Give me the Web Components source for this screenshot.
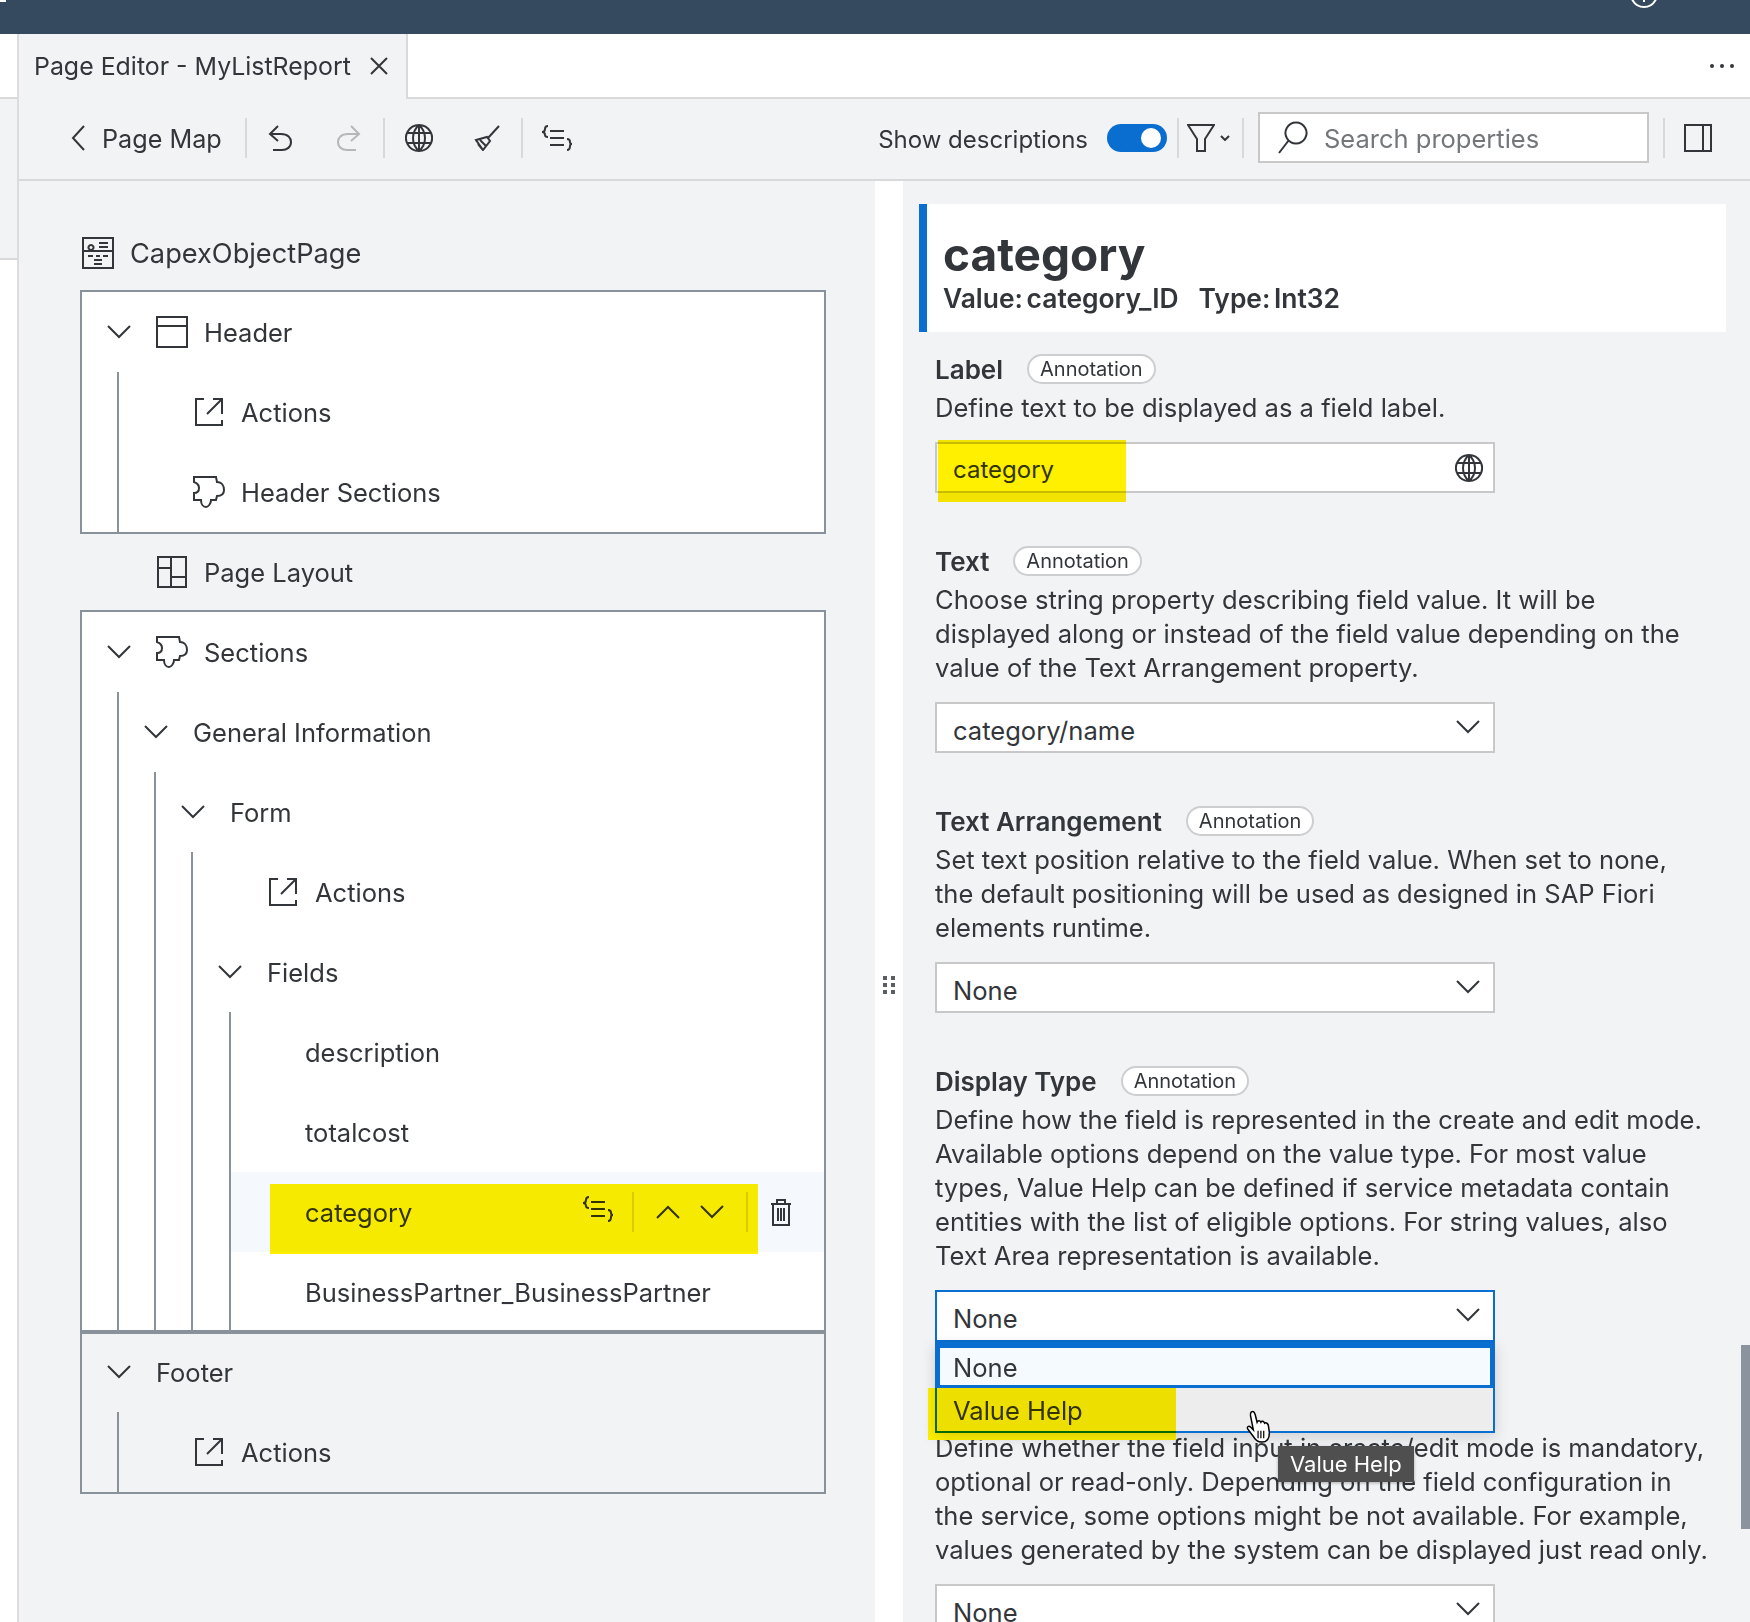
<!DOCTYPE html>
<html>
<head>
<meta charset="utf-8">
<title>Page Editor - MyListReport</title>
<style>
  html, body { margin: 0; height: 1622px; overflow: hidden; background: #fff; }
  body { font-family: Inter, "Liberation Sans", sans-serif; color: #32363a; font-size: 25.5px; }
</style>
</head>
<body>
<ide-frame>
  <top-bar></top-bar>
  <side-strip slot="strip"></side-strip>
  <tab-bar slot="editor" title-text="Page Editor - MyListReport"></tab-bar>
  <tool-bar slot="editor"></tool-bar>
  <editor-body slot="editor">
    <tree-pane slot="tree" title-text="CapexObjectPage">
      <tree-box>
        <tree-row chevron icon="window">Header</tree-row>
        <tree-group indent="35">
          <tree-row icon="external">Actions</tree-row>
          <tree-row icon="puzzle">Header Sections</tree-row>
        </tree-group>
      </tree-box>
      <tree-row icon="layout" outer>Page Layout</tree-row>
      <tree-box clip="722">
        <tree-row chevron icon="puzzle">Sections</tree-row>
        <tree-group indent="35">
          <tree-row chevron>General Information</tree-row>
          <tree-group indent="35">
            <tree-row chevron>Form</tree-row>
            <tree-group indent="35">
              <tree-row icon="external">Actions</tree-row>
              <tree-row chevron>Fields</tree-row>
              <tree-group indent="36">
                <tree-row>description</tree-row>
                <tree-row>totalcost</tree-row>
                <tree-row selected>category
                  <row-actions slot="actions"></row-actions>
                </tree-row>
                <tree-row>BusinessPartner_BusinessPartner</tree-row>
              </tree-group>
            </tree-group>
          </tree-group>
        </tree-group>
      </tree-box>
      <tree-box clip="162" plain>
        <tree-row chevron height="78" style="padding-bottom: 2px">Footer</tree-row>
        <tree-group indent="35">
          <tree-row icon="external">Actions</tree-row>
        </tree-group>
      </tree-box>
    </tree-pane>
    <pane-splitter slot="splitter"></pane-splitter>
    <props-pane slot="props">
      <props-header name="category" value="category_ID" type="Int32"></props-header>
      <prop-field label="Label" badge="Annotation">
        Define text to be displayed as a field label.
        <prop-input slot="control" value="category" marked></prop-input>
      </prop-field>
      <prop-field label="Text" badge="Annotation">
        Choose string property describing field value. It will be displayed along or instead of the field value depending on the value of the Text Arrangement property.
        <prop-select slot="control" value="category/name"></prop-select>
      </prop-field>
      <prop-field label="Text Arrangement" badge="Annotation">
        Set text position relative to the field value. When set to none, the default positioning will be used as designed in SAP Fiori elements runtime.
        <prop-select slot="control" value="None"></prop-select>
      </prop-field>
      <prop-field label="Display Type" badge="Annotation" raised>
        Define how the field is represented in the create and edit mode. Available options depend on the value type. For most value types, Value Help can be defined if service metadata contain entities with the list of eligible options. For string values, also Text Area representation is available.
        <prop-select slot="control" value="None" open></prop-select>
      </prop-field>
      <prop-field>
        Define whether the field input in create/edit mode is mandatory, optional or read-only. Depending on the field configuration in the service, some options might be not available. For example, values generated by the system can be displayed just read only.
        <prop-select slot="control" value="None"></prop-select>
      </prop-field>
    </props-pane>
  </editor-body>
</ide-frame>

<script>
const ICONS = {
  chevronDown: [24, 14, 'M1 1L12 12L23 1'],
  chevronUp: [24, 14, 'M1 13L12 2L23 13'],
  chevronLeft: [14, 26, 'M13 1L2 13L13 25'],
  close: [18, 18, 'M1 1L17 17M17 1L1 17'],
  window: [32, 32, 'M1 1H31V31H1ZM1 10H31'],
  external: [28, 28, 'M9 1H1V27H27V22M18 1H27V16M27 1L12 16'],
  puzzle: [32, 32, 'M1 1H23L24 6C29 6 31 10 31 14C31 18 28 20 24 20L23 24H18C18 28 15 31 13 31C10 31 8 28 8 24H1V17C4 17 6 15 6 12C6 9 4 7 1 6Z'],
  layout: [30, 32, 'M1 1H29V31H1ZM14 1V31M1 12H14M14 21H29'],
  page: [32, 32, 'M1 1H31V31H1ZM1 14H31M17 6H26M17 10H26M6 19H11M14 19H18M21 19H26M12 23H20M12 27H20M9 8a2.5 2.5 0 1 0 .01 0'],
  undo: [25, 26, 'M10 1L2 9L10 16M2 9H13C20 9 23 13 23 17C23 22 19 25 14 25H5'],
  redo: [25, 26, 'M15 1L23 9L15 16M23 9H12C5 9 2 13 2 17C2 22 6 25 11 25H20'],
  globe: [28, 28, 'M14 1a13 13 0 1 0 .01 0M14 1C6 8 6 20 14 27C22 20 22 8 14 1M14 1V27M2.500 9H25.500M2.500 19H25.500'],
  broom: [26, 26, 'M25 1L14 13M2 15L13 12L16 16L9 25ZM6 15L12 21M4 19L9 25'],
  braces: [33, 26, 'M8 1C5 1 5 3 5 4C5 6 4 7 2 7C4 7 5 8 5 10C5 11 6 12 8 12M10 6H24M10 13H24M10 20H24M27 14C29 14 30 15 30 17C30 18 30 19 32 19C30 19 30 20 30 21C30 23 29 25 27 25'],
  funnel: [28, 28, 'M1 1H27L18 15V27H10V15Z'],
  search: [32, 33, 'M19 1.500a10.500 10.500 0 1 0 .01 0M12 19L2 32'],
  panel: [28, 28, 'M1 1H27V27H1ZM19 1V27'],
  trash: [22, 27, 'M1 5H21M7 5V1H15V5M3 5V26H19V5M8 9V22M11 9V22M14 9V22'],
  info: [28, 28, 'M14 1a13 13 0 1 0 .01 0M14 12V22M14 7V9']
};

class UiIcon extends HTMLElement {
  connectedCallback() {
    const [w, h, d] = ICONS[this.getAttribute('name')];
    const stroke = this.getAttribute('stroke') || '#32363a';
    const width = this.getAttribute('line') || '2';
    this.attachShadow({ mode: 'open' }).innerHTML = `
      <style>:host { display: inline-flex; flex: none; } svg { display: block; }</style>
      <svg width="${w}" height="${h}" viewBox="0 0 ${w} ${h}" fill="none" stroke="${stroke}" stroke-width="${width}"><path d="${d}"/></svg>`;
  }
}
customElements.define('ui-icon', UiIcon);

// yellow marker pen from the original screenshot, multiplied over the page
class MarkerPen extends HTMLElement {
  connectedCallback() {
    this.attachShadow({ mode: 'open' }).innerHTML = `
      <style>:host { position: absolute; background: #fff000; mix-blend-mode: multiply; pointer-events: none; }</style>`;
  }
}
customElements.define('marker-pen', MarkerPen);

class IdeFrame extends HTMLElement {
  constructor() {
    super();
    this.attachShadow({ mode: 'open' }).innerHTML = `
      <style>
        :host { display: flex; flex-direction: column; height: 1622px; }
        .main { flex: 1; display: flex; min-height: 0; }
        .editor { flex: 1; min-width: 0; display: flex; flex-direction: column; }
      </style>
      <slot></slot>
      <div class="main">
        <slot name="strip"></slot>
        <div class="editor"><slot name="editor"></slot></div>
      </div>`;
  }
}
customElements.define('ide-frame', IdeFrame);

class TopBar extends HTMLElement {
  constructor() {
    super();
    this.attachShadow({ mode: 'open' }).innerHTML = `
      <style>
        :host { display: flex; justify-content: flex-end; height: 34px; background: #354a5f; overflow: hidden; position: relative; }
        .tick { position: absolute; left: 0; top: 0; width: 6px; height: 2px; background: #fff; }
        .info { margin: -20px 92px 0 0; }
      </style>
      <span class="tick"></span>
      <ui-icon class="info" name="info" stroke="#fff"></ui-icon>`;
  }
}
customElements.define('top-bar', TopBar);

class SideStrip extends HTMLElement {
  constructor() {
    super();
    this.attachShadow({ mode: 'open' }).innerHTML = `
      <style>
        :host { display: flex; flex-direction: column; flex: none; width: 19px; border-right: 2px solid #dcdcdc; box-sizing: border-box; }
        .top { height: 63px; border-bottom: 2px solid #d9d9d9; }
        .mid { height: 159px; background: #f2f3f5; border-bottom: 2px solid #d9d9d9; }
      </style>
      <div class="top"></div>
      <div class="mid"></div>`;
  }
}
customElements.define('side-strip', SideStrip);

class TabBar extends HTMLElement {
  connectedCallback() {
    this.attachShadow({ mode: 'open' }).innerHTML = `
      <style>
        :host { display: flex; height: 65px; box-sizing: border-box; border-bottom: 2px solid #d9d9d9; align-items: stretch; }
        .tab { display: flex; align-items: center; gap: 19px; width: 389px; box-sizing: border-box; height: 65px; padding: 0 0 2px 15px; background: #f2f3f5; border-right: 2px solid #d9d9d9; font-size: 24.9px; white-space: nowrap; }
        .more { margin-left: auto; margin-right: 16px; align-self: center; display: flex; gap: 6px; }
        .more i { width: 4px; height: 4px; border-radius: 50%; background: #32363a; }
      </style>
      <div class="tab">${this.getAttribute('title-text')}<ui-icon name="close"></ui-icon></div>
      <div class="more"><i></i><i></i><i></i></div>`;
  }
}
customElements.define('tab-bar', TabBar);

class ToolBar extends HTMLElement {
  constructor() {
    super();
    this.attachShadow({ mode: 'open' }).innerHTML = `
      <style>
        :host { display: flex; align-items: center; height: 82px; box-sizing: border-box; padding: 0 38px 2px 52px; background: #f2f3f5; border-bottom: 2px solid #d9d9d9; font-size: 25px; white-space: nowrap; }
        .sep { flex: none; width: 2px; height: 40px; background: #d9d9d9; }
        .back { display: flex; align-items: center; gap: 17px; margin-right: 23px; }
        .back span { font-size: 25.2px; padding-top: 2px; }
        .btn { flex: none; width: 68px; display: flex; justify-content: center; }
        .right { margin-left: auto; display: flex; align-items: center; }
        .label { font-size: 24px; padding-top: 3px; }
        .toggle { flex: none; width: 60px; height: 28px; border-radius: 14px; background: #0a6ed1; margin: 0 10px 0 19px; display: flex; align-items: center; justify-content: flex-end; padding-right: 6px; box-sizing: border-box; }
        .toggle i { width: 20px; height: 20px; border-radius: 50%; background: #fff; }
        .filter { display: flex; align-items: center; gap: 5px; margin: 0 12px 0 8px; }
        .search { width: 391px; height: 51px; box-sizing: border-box; margin: -2px 14px 0; background: #fff; border: 2px solid #c8c8c8; display: flex; align-items: center; gap: 15px; padding-left: 17px; color: #74777a; font-size: 25.5px; }
        .search span { padding-top: 2px; }
        .panel { margin-left: 19px; }
      </style>
      <div class="back"><ui-icon name="chevronLeft"></ui-icon><span>Page Map</span></div>
      <span class="sep"></span>
      <span class="btn"><ui-icon name="undo"></ui-icon></span>
      <span class="btn"><ui-icon name="redo" stroke="#b5b8bb"></ui-icon></span>
      <span class="sep"></span>
      <span class="btn"><ui-icon name="globe"></ui-icon></span>
      <span class="btn"><ui-icon name="broom"></ui-icon></span>
      <span class="sep"></span>
      <span class="btn"><ui-icon name="braces"></ui-icon></span>
      <div class="right">
        <span class="label">Show descriptions</span>
        <span class="toggle"><i></i></span>
        <span class="sep"></span>
        <span class="filter"><ui-icon name="funnel"></ui-icon><svg width="10" height="6" viewBox="0 0 10 6" fill="none" stroke="#32363a" stroke-width="2"><path d="M1 1L5 5L9 1"/></svg></span>
        <span class="sep"></span>
        <div class="search"><ui-icon name="search"></ui-icon><span>Search properties</span></div>
        <span class="sep"></span>
        <ui-icon class="panel" name="panel"></ui-icon>
      </div>`;
  }
}
customElements.define('tool-bar', ToolBar);

class EditorBody extends HTMLElement {
  constructor() {
    super();
    this.attachShadow({ mode: 'open' }).innerHTML = `
      <style>:host { flex: 1; min-height: 0; display: grid; grid-template-columns: 856px 28px 1fr; }</style>
      <slot name="tree"></slot><slot name="splitter"></slot><slot name="props"></slot>`;
  }
}
customElements.define('editor-body', EditorBody);

class TreePane extends HTMLElement {
  connectedCallback() {
    this.attachShadow({ mode: 'open' }).innerHTML = `
      <style>
        :host { display: block; background: #f2f3f5; padding: 39px 49px 0 61px; overflow: hidden; font-size: 25.5px; }
        .title { display: flex; align-items: center; gap: 16px; height: 66px; margin: 0 0 4px 0; padding-left: 2px; font-size: 27.2px; }
      </style>
      <div class="title"><ui-icon name="page"></ui-icon>${this.getAttribute('title-text')}</div>
      <slot></slot>`;
  }
}
customElements.define('tree-pane', TreePane);

class TreeBox extends HTMLElement {
  connectedCallback() {
    const clip = this.getAttribute('clip');
    this.attachShadow({ mode: 'open' }).innerHTML = `
      <style>
        :host { display: block; box-sizing: border-box; border: 2px solid #89919a; overflow: hidden; background: ${this.hasAttribute('plain') ? 'transparent' : '#fff'}; ${clip ? `height: ${clip}px;` : ''} }
      </style>
      <slot></slot>`;
  }
}
customElements.define('tree-box', TreeBox);

class TreeGroup extends HTMLElement {
  connectedCallback() {
    this.attachShadow({ mode: 'open' }).innerHTML = `
      <style>:host { display: block; margin-left: ${this.getAttribute('indent')}px; border-left: 2px solid #89919a; }</style>
      <slot></slot>`;
  }
}
customElements.define('tree-group', TreeGroup);

class TreeRow extends HTMLElement {
  connectedCallback() {
    const icon = this.getAttribute('icon');
    const chevron = this.hasAttribute('chevron');
    const selected = this.hasAttribute('selected');
    const outer = this.hasAttribute('outer');
    const height = this.getAttribute('height') || (outer ? 76 : 80);
    this.attachShadow({ mode: 'open' }).innerHTML = `
      <style>
        :host { display: flex; align-items: center; position: relative; box-sizing: border-box; height: ${height}px; white-space: nowrap; padding-left: ${outer ? 76 : chevron ? 25 : 74}px; ${selected ? 'background: #f5f9fe;' : ''} }
        .chev { width: 49px; flex: none; display: flex; }
        .ico { width: 32px; margin-right: 16px; flex: none; display: flex; justify-content: center; }
        ::slotted([slot=actions]) { margin-left: auto; }
        marker-pen { left: 39px; top: 12px; width: 488px; height: 70px; }
      </style>
      ${chevron ? '<span class="chev"><ui-icon name="chevronDown"></ui-icon></span>' : ''}
      ${icon ? `<span class="ico"><ui-icon name="${icon}"></ui-icon></span>` : ''}
      <slot></slot>
      <slot name="actions"></slot>
      ${selected ? '<marker-pen></marker-pen>' : ''}`;
  }
}
customElements.define('tree-row', TreeRow);

class RowActions extends HTMLElement {
  constructor() {
    super();
    this.attachShadow({ mode: 'open' }).innerHTML = `
      <style>
        :host { display: flex; align-items: center; padding-right: 32px; }
        .sep { width: 2px; height: 40px; background: #d9d9d9; }
      </style>
      <ui-icon name="braces" style="margin:-6px 18px 0 0"></ui-icon>
      <span class="sep"></span>
      <ui-icon name="chevronUp" style="margin:0 20px 0 22px"></ui-icon>
      <ui-icon name="chevronDown" style="margin-right:22px"></ui-icon>
      <span class="sep"></span>
      <ui-icon name="trash" style="margin-left:22px"></ui-icon>`;
  }
}
customElements.define('row-actions', RowActions);

class PaneSplitter extends HTMLElement {
  constructor() {
    super();
    this.attachShadow({ mode: 'open' }).innerHTML = `
      <style>
        :host { display: flex; align-items: flex-start; justify-content: center; background: #fff; padding-top: 795px; }
        .grip { display: grid; grid-template-columns: 4px 4px; gap: 3px 4px; }
        .grip i { width: 4px; height: 4px; background: #5a5e62; }
      </style>
      <div class="grip"><i></i><i></i><i></i><i></i><i></i><i></i></div>`;
  }
}
customElements.define('pane-splitter', PaneSplitter);

class PropsPane extends HTMLElement {
  constructor() {
    super();
    this.attachShadow({ mode: 'open' }).innerHTML = `
      <style>
        :host { display: block; position: relative; background: #f2f3f5; padding: 23px 24px 0 16px; overflow: hidden; font-size: 25.55px; line-height: 34px; }
        .thumb { position: absolute; right: 0; top: 1164px; width: 9px; height: 184px; background: #8a939e; }
      </style>
      <slot></slot>
      <div class="thumb"></div>`;
  }
}
customElements.define('props-pane', PropsPane);

class PropsHeader extends HTMLElement {
  connectedCallback() {
    const name = this.getAttribute('name');
    const value = this.getAttribute('value');
    const type = this.getAttribute('type');
    this.attachShadow({ mode: 'open' }).innerHTML = `
      <style>
        :host { display: block; box-sizing: border-box; height: 128px; margin-bottom: 20px; background: #fff; border-left: 8px solid #0a6ed1; padding: 22px 0 0 16px; }
        h1 { margin: 0; font-size: 46px; line-height: 56px; font-weight: 700; }
        .meta { display: flex; gap: 20px; font-size: 26.4px; line-height: 32px; font-weight: 600; word-spacing: -3px; }
      </style>
      <h1>${name}</h1>
      <div class="meta"><span>Value: ${value}</span><span>Type: ${type}</span></div>`;
  }
}
customElements.define('props-header', PropsHeader);

class PropField extends HTMLElement {
  connectedCallback() {
    const label = this.getAttribute('label');
    const badge = this.getAttribute('badge');
    this.attachShadow({ mode: 'open' }).innerHTML = `
      <style>
        :host { display: block; margin: 0 0 51px 16px; ${this.hasAttribute('raised') ? 'position: relative; z-index: 2;' : ''} }
        .head { display: flex; align-items: center; gap: 24px; height: 34px; margin-bottom: 5px; font-weight: 600; font-size: 26px; }
        .head span:first-child { padding-top: 1px; }
        .badge { height: 30px; box-sizing: border-box; padding: 1px 11px 0; border: 2px solid #ccced0; border-radius: 15px; background: #fff; font-size: 20px; font-weight: 400; line-height: 25px; }
        .desc { max-width: 776px; }
        .control { margin-top: 17px; }
      </style>
      <div class="head">${label ? `<span>${label}</span>` : ''}${badge ? `<span class="badge">${badge}</span>` : ''}</div>
      <div class="desc"><slot></slot></div>
      <div class="control"><slot name="control"></slot></div>`;
  }
}
customElements.define('prop-field', PropField);

class PropInput extends HTMLElement {
  connectedCallback() {
    this.attachShadow({ mode: 'open' }).innerHTML = `
      <style>
        :host { display: flex; align-items: center; position: relative; width: 560px; height: 51px; box-sizing: border-box; background: #fff; border: 2px solid #c8c8c8; padding: 0 10px 0 16px; justify-content: space-between; }
        span { font-size: 24px; padding-top: 5px; }
        marker-pen { left: 1px; top: -4px; width: 188px; height: 62px; }
      </style>
      <span>${this.getAttribute('value')}</span>
      <ui-icon name="globe"></ui-icon>
      ${this.hasAttribute('marked') ? '<marker-pen></marker-pen>' : ''}`;
  }
}
customElements.define('prop-input', PropInput);

class PropSelect extends HTMLElement {
  connectedCallback() {
    const open = this.hasAttribute('open');
    const value = this.getAttribute('value');
    this.attachShadow({ mode: 'open' }).innerHTML = `
      <style>
        :host { display: block; position: relative; width: 560px; height: 51px; }
        .box { display: flex; align-items: center; justify-content: space-between; height: ${open ? 52 : 51}px; box-sizing: border-box; background: #fff; border: 2px solid ${open ? '#0a6ed1' : '#c8c8c8'}; padding: 0 13px 0 16px; }
        .box span { padding-top: 6px; }
        .box ui-icon { margin-top: -2px; }
        .menu { position: absolute; left: 0; right: 0; top: 52px; box-sizing: border-box; height: 91px; border: 2px solid #0a6ed1; border-top: 3px solid #0a6ed1; background: #ededee; box-shadow: 0 4px 14px rgba(0, 0, 0, .15); }
        .opt { position: relative; box-sizing: border-box; display: flex; align-items: center; padding: 2px 0 0 16px; }
        .opt.sel { height: 43px; background: #f5faff; border: 3px solid #0a6ed1; padding-left: 13px; }
        .opt.hov { height: 41px; padding-top: 4px; }
        .opt marker-pen { left: -9px; top: 0; width: 248px; height: 52px; }
        .hand { position: absolute; left: 308px; top: 65px; }
        .tip { position: absolute; left: 341px; top: 101px; height: 36px; box-sizing: border-box; padding: 0 12px; display: flex; align-items: center; background: #4f4f4f; color: #fff; font-size: 22px; white-space: nowrap; box-shadow: 0 1px 3px rgba(0, 0, 0, .3); }
      </style>
      <div class="box"><span>${value}</span><ui-icon name="chevronDown"></ui-icon></div>
      ${open ? `
      <div class="menu">
        <div class="opt sel">None</div>
        <div class="opt hov">Value Help<marker-pen></marker-pen></div>
        <svg class="hand" width="28" height="34" viewBox="0 0 28 36" fill="#fff" stroke="#000" stroke-width="1.6"><path d="M6 2C8 1 9 2 10 5L12 13C13 11 15 11 16 13C17 11 19 12 20 14C21 13 24 14 24 17L25 24C25 29 23 34 17 34C12 34 10 32 8 28L2 20C1 18 3 16 5 18L8 21L5 6C4.500 4 5 3 6 2Z"/><path d="M13 22V30M16 22V30M19 22V30" stroke-width="1.300"/></svg>
        <div class="tip">Value Help</div>
      </div>` : ''}`;
  }
}
customElements.define('prop-select', PropSelect);
</script>
</body>
</html>
